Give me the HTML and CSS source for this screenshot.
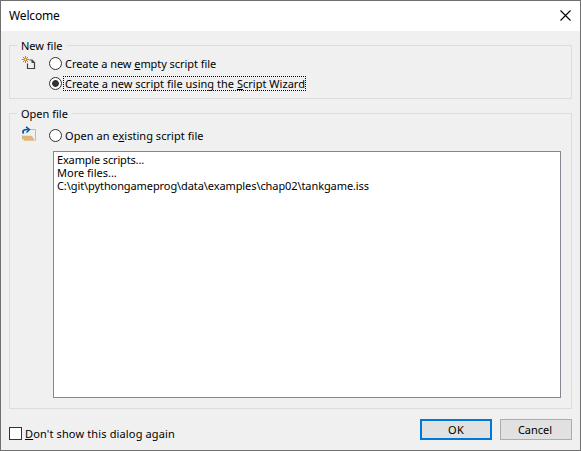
FILE: index.html
```html
<!DOCTYPE html>
<html lang="en">
<head>
<meta charset="utf-8">
<title>Welcome</title>
<link rel="stylesheet" href="styles.css">
</head>
<body>
<div class="dialog">
  <header class="titlebar">
    <h1 class="title">Welcome</h1>
    <svg class="close" width="11" height="11" viewBox="0 0 11 11"><path d="M.5 .5l10 10M10.5 .5l-10 10" stroke="#000" stroke-width="1.1"/></svg>
  </header>
  <main class="content">
    <section class="group group-new">
      <h2 class="legend"><span>New file</span></h2>
      <svg class="icon" width="16" height="16" viewBox="0 0 16 16" fill="none">
        <path d="M6.500 7.500v5h7V6.500L11 4H8.500" stroke="#424242" stroke-width="1.200"/><path d="M10.500 4v3h3z" fill="#424242"/>
        <path d="M4.500 0v7M1 3.500h7M2 1l5 5M7 1L2 6" stroke="#c27d1a"/><circle cx="4.500" cy="3.500" r=".9" fill="#f0f0f0"/>
      </svg>
      <div class="options">
        <label class="option"><span class="radio"></span><span class="label t-empty">Create a new <u>e</u>mpty script file</span></label>
        <label class="option"><span class="radio checked"></span><span class="label focused t-wizard">Create a new script file using the <u>S</u>cript Wizard</span></label>
      </div>
    </section>
    <section class="group group-open">
      <h2 class="legend"><span>Open file</span></h2>
      <svg class="icon" width="16" height="16" viewBox="0 0 16 16" fill="none">
        <path d="M9 3.500h5.500v11M1.500 9.500v4" stroke="#dcb67a"/><path d="M1 9.800h9.800l3 5H3z" fill="#dcb67a"/>
        <path d="M2.600 7.500C.8 4.500 3 3.200 7 3.500" stroke="#00539c" stroke-width="1.600"/><path d="M5 .8l3.500 2.800L5.500 6.500" stroke="#00539c" stroke-width="1.400"/>
      </svg>
      <div class="options">
        <label class="option"><span class="radio"></span><span class="label t-existing">Open an e<u>x</u>isting script file</span></label>
        <ul class="list">
          <li class="t-examples">Example scripts...</li>
          <li>More files...</li>
          <li class="t-path">C:\git\pythongameprog\data\examples\chap02\tankgame.iss</li>
        </ul>
      </div>
    </section>
  </main>
  <footer class="footer">
    <label class="again"><span class="checkbox"></span><span class="t-again"><u>D</u>on't show this dialog again</span></label>
    <button class="button primary">OK</button>
    <button class="button">Cancel</button>
  </footer>
</div>
</body>
</html>
```
FILE: styles.css
```css
* { box-sizing: border-box; }
body { margin: 0; font: 11px/13px "Noto Sans", "Open Sans", sans-serif; color: #000; }
h1, h2, ul { margin: 0; padding: 0; font: inherit; list-style: none; }
u { text-decoration-thickness: 1px; text-underline-offset: 1px; text-decoration-skip-ink: none; }
span, li { white-space: nowrap; }
.dialog { width: 581px; height: 451px; border: 1px solid #707070; background: #f0f0f0; display: flex; flex-direction: column; }
.titlebar { height: 30px; flex: none; background: #fff; display: flex; align-items: center; justify-content: space-between; padding: 0 9px 0 8px; }
.title { font-size: 12px; line-height: 16px; letter-spacing: -.15px; }
.close { display: block; margin-top: -2px; }
.content { padding: 14px 8px 0; display: flex; flex-direction: column; gap: 14px; }
.group { display: grid; grid-template-columns: 39px 1fr; grid-template-rows: 11px 1fr; border: 1px solid #dcdcdc; }
.group-new { height: 54px; }
.group-open { height: 296px; grid-template-rows: 15px 1fr; }
.legend { grid-column: 1 / 3; justify-self: start; height: 13px; margin: -7px 0 0 7px; padding: 0 4px; background: #f0f0f0; }
.icon { margin: -1px 0 0 11px; }
.group-open .icon { margin-top: -3px; }
.options { display: flex; flex-direction: column; gap: 7px; padding-right: 10px; }
.option { display: flex; align-items: center; height: 13px; gap: 2px; }
.radio { width: 13px; height: 13px; border: 1px solid #333; border-radius: 50%; background: #fff; flex: none; }
.checked { background: radial-gradient(circle, #333 3px, #fff 3.8px); }
.label { padding: 0 1px; }
.focused { padding-right: 0; outline: 1px dotted #000; }
.list { height: 247px; margin: 2px 0 0 4px; border: 1px solid #828790; background: #fff; padding: 1px 3px; }
.footer { flex: 1; display: flex; gap: 8px; padding: 10px 8px 0; }
.again { display: flex; align-items: center; height: 13px; margin: 8px auto 0 0; gap: 3px; }
.checkbox { width: 13px; height: 13px; border: 1px solid #333; background: #fff; }
.button { width: 72px; height: 21px; padding: 0 2px 0 0; border: 1px solid #adadad; background: #e1e1e1; font: inherit; color: #000; }
.primary { padding-right: 0; border: 2px solid #0078d7; letter-spacing: .2px; }
.t-empty { letter-spacing: -.06px; }
.t-wizard { letter-spacing: .02px; }
.t-existing { letter-spacing: .04px; }
.t-examples { letter-spacing: -.16px; }
.t-path { letter-spacing: -.09px; }
.t-again { letter-spacing: .14px; }
```
